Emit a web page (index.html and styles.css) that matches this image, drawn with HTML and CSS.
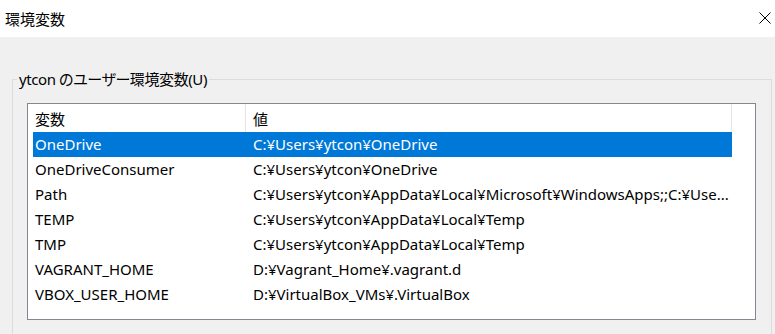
FILE: index.html
```html
<!DOCTYPE html>
<html lang="ja">
<head>
    <meta charset="UTF-8">
    <title>環境変数</title>
    <link rel="stylesheet" href="styles.css">
</head>
<body>

    <!-- Barra de título -->
    <div class="titulo">
        <span>環境変数</span>
        <svg class="cerrar" width="12" height="12" viewBox="0 0 12 12">
            <path d="M0.5 0.5 L11.5 11.5 M11.5 0.5 L0.5 11.5" stroke="#000" stroke-width="1" fill="none"/>
        </svg>
    </div>

    <div class="contenido">
        <fieldset class="grupo">
            <legend>ytcon のユーザー環境変数(U)</legend>

            <div class="lista">
                <div class="cabecera">
                    <div class="col col-nombre">変数</div>
                    <div class="col col-valor">値</div>
                </div>

                <div class="fila seleccionada">
                    <div class="celda-nombre">OneDrive</div>
                    <div class="celda-valor">C:¥Users¥ytcon¥OneDrive</div>
                </div>
                <div class="fila">
                    <div class="celda-nombre">OneDriveConsumer</div>
                    <div class="celda-valor">C:¥Users¥ytcon¥OneDrive</div>
                </div>
                <div class="fila">
                    <div class="celda-nombre">Path</div>
                    <div class="celda-valor">C:¥Users¥ytcon¥AppData¥Local¥Microsoft¥WindowsApps;;C:¥Use...</div>
                </div>
                <div class="fila">
                    <div class="celda-nombre">TEMP</div>
                    <div class="celda-valor">C:¥Users¥ytcon¥AppData¥Local¥Temp</div>
                </div>
                <div class="fila">
                    <div class="celda-nombre">TMP</div>
                    <div class="celda-valor">C:¥Users¥ytcon¥AppData¥Local¥Temp</div>
                </div>
                <div class="fila">
                    <div class="celda-nombre">VAGRANT_HOME</div>
                    <div class="celda-valor">D:¥Vagrant_Home¥.vagrant.d</div>
                </div>
                <div class="fila">
                    <div class="celda-nombre">VBOX_USER_HOME</div>
                    <div class="celda-valor">D:¥VirtualBox_VMs¥.VirtualBox</div>
                </div>
            </div>
        </fieldset>
    </div>

</body>
</html>
```

FILE: styles.css
```css
/* Estilos generales */
body {
    margin: 0;
    background-color: #f0f0f0;
    color: #000;
    font-family: "Noto Sans", "Noto Sans CJK JP", sans-serif;
    font-size: 15px;
}

/* Barra de título */
.titulo {
    height: 37px;
    background-color: #fff;
    display: flex;
    align-items: center;
    justify-content: space-between;
    padding: 0 4px 0 5px;
    box-sizing: border-box;
}

.titulo span {
    font-family: "Noto Sans CJK JP", sans-serif;
    margin-top: -1px;
}

.cerrar {
    margin-top: -1px;
}

.contenido {
    padding: 32px 3px 0 12px;
}

/* Grupo (fieldset) */
.grupo {
    margin: 0;
    padding: 0;
    border: 1px solid #dcdcdc;
    min-width: 0;
}

.grupo legend {
    margin-left: 4px;
    padding: 0 2px;
    line-height: 20px;
    letter-spacing: -0.4px;
    font-feature-settings: "palt";
}

/* Lista de variables */
.lista {
    margin: 14px 15px 20px 14px;
    height: 217px;
    box-sizing: border-box;
    border: 1px solid #828790;
    background-color: #fff;
}

.cabecera {
    display: flex;
    height: 28px;
}

.col {
    box-sizing: border-box;
    border-right: 1px solid #e5e5e5;
    padding: 3px 0 0 7px;
    line-height: 25px;
}

.col-nombre {
    width: 218px;
}

.col-valor {
    width: 486px;
}

.fila {
    display: flex;
    height: 25px;
    line-height: 25px;
    margin-left: 5px;
    width: 699px;
    white-space: nowrap;
}

.celda-nombre {
    width: 213px;
    padding-left: 2px;
    box-sizing: border-box;
}

.celda-valor {
    flex: 1;
    padding-left: 7px;
    overflow: hidden;
}

/* Fila seleccionada */
.seleccionada {
    background-color: #0078d7;
    color: #fff;
}
```
